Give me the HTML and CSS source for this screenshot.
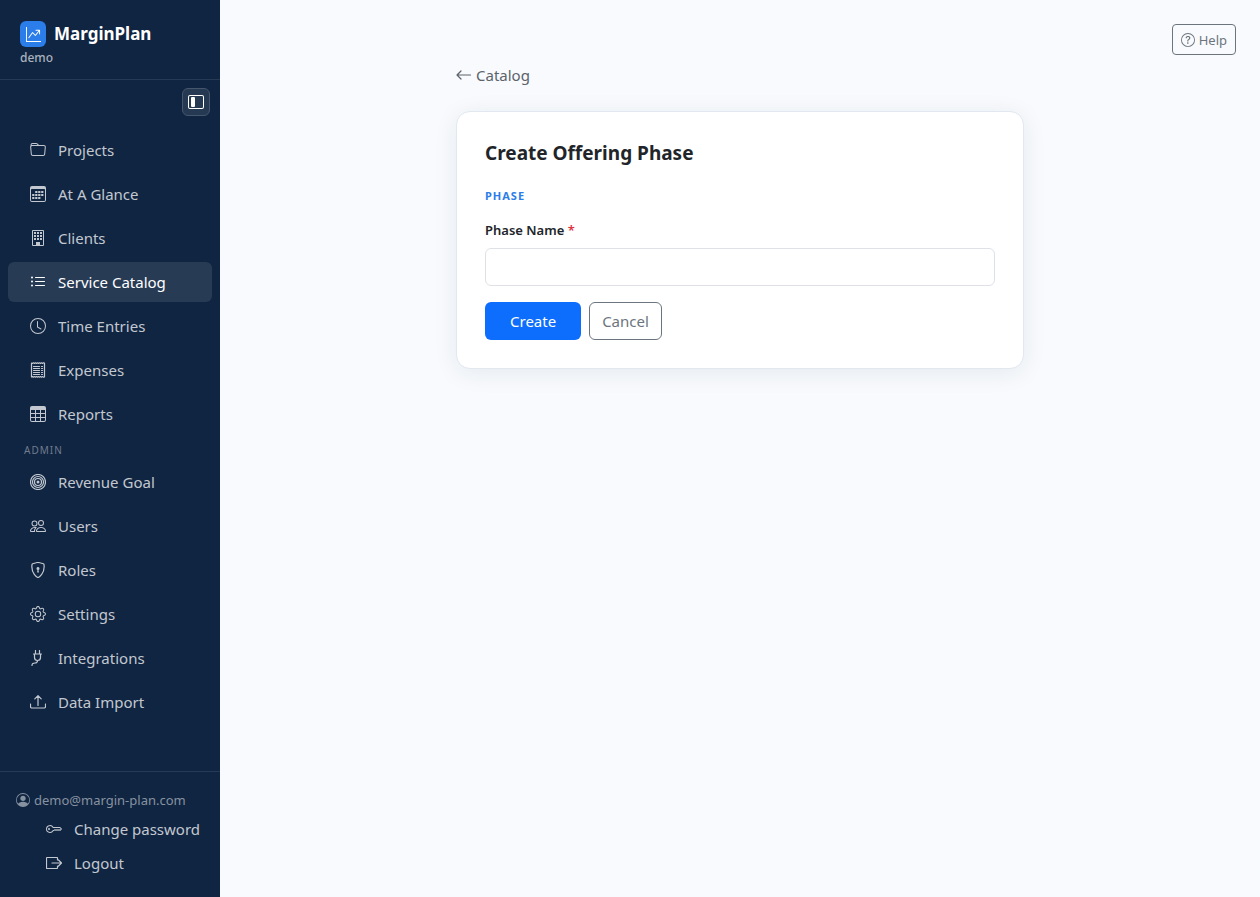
FILE: index.html
```html
<!DOCTYPE html>
<html lang="en">
<head>
    <meta charset="UTF-8">
    <meta name="viewport" content="width=device-width, initial-scale=1.0">
    <title>Create Offering Phase - MarginPlan</title>
    <link rel="stylesheet" href="styles.css">
</head>
<body>

    <aside class="sidebar">
        <div class="brand">
            <a class="brand-link" href="#">
                <span class="brand-logo">
                    <svg class="icon" viewBox="0 0 16 16"><path d="M0 0h1v15h15v1H0zm10 3.5a.5.5 0 0 1 .5-.5h4a.5.5 0 0 1 .5.5v4a.5.5 0 0 1-1 0V4.9l-3.613 4.417a.5.5 0 0 1-.74.037L7.06 6.767l-3.656 5.027a.5.5 0 0 1-.808-.588l4-5.5a.5.5 0 0 1 .758-.06l2.609 2.61L13.445 4H10.5a.5.5 0 0 1-.5-.5"/></svg>
                </span>
                MarginPlan
            </a>
            <div class="tenant">demo</div>
        </div>

        <div class="toggle-row">
            <button class="toggle" type="button" aria-label="Toggle sidebar">
                <svg class="icon" viewBox="0 0 16 16"><path fill-rule="evenodd" d="M0 3a2 2 0 0 1 2-2h12a2 2 0 0 1 2 2v10a2 2 0 0 1-2 2H2a2 2 0 0 1-2-2zm2-1a1 1 0 0 0-1 1v10a1 1 0 0 0 1 1h12a1 1 0 0 0 1-1V3a1 1 0 0 0-1-1z"/><path d="M3 4a1 1 0 0 1 1-1h2a1 1 0 0 1 1 1v8a1 1 0 0 1-1 1H4a1 1 0 0 1-1-1z"/></svg>
            </button>
        </div>

        <nav class="nav">
            <a class="nav-link" href="#">
                <svg class="icon" viewBox="0 0 16 16"><path d="M.54 3.87.5 3a2 2 0 0 1 2-2h3.672a2 2 0 0 1 1.414.586l.828.828A2 2 0 0 0 9.828 3h3.982a2 2 0 0 1 1.992 2.181l-.637 7A2 2 0 0 1 13.174 14H2.826a2 2 0 0 1-1.991-1.819l-.637-7a2 2 0 0 1 .342-1.31zM2.19 4a1 1 0 0 0-.996 1.09l.637 7a1 1 0 0 0 .995.91h10.348a1 1 0 0 0 .995-.91l.637-7A1 1 0 0 0 13.81 4zm4.69-1.707A1 1 0 0 0 6.172 2H2.5a1 1 0 0 0-1 .981l.006.139q.323-.119.684-.12h5.396z"/></svg>
                Projects
            </a>
            <a class="nav-link" href="#">
                <svg class="icon" viewBox="0 0 16 16"><path fill-rule="evenodd" d="M14 0H2a2 2 0 0 0-2 2v12a2 2 0 0 0 2 2h12a2 2 0 0 0 2-2V2a2 2 0 0 0-2-2M1 3.857C1 3.384 1.448 3 2 3h12c.552 0 1 .384 1 .857v10.286c0 .473-.448.857-1 .857H2c-.552 0-1-.384-1-.857z"/><path d="M5.2 5h2.2v2H5.2zm3 0h2.2v2H8.2zm3 0h2.2v2h-2.2zm-9 3h2.2v2H2.2zm3 0h2.2v2H5.2zm3 0h2.2v2H8.2zm3 0h2.2v2h-2.2zm-9 3h2.2v2H2.2zm3 0h2.2v2H5.2zm3 0h2.2v2H8.2z"/></svg>
                At A Glance
            </a>
            <a class="nav-link" href="#">
                <svg class="icon" viewBox="0 0 16 16"><path fill-rule="evenodd" d="M3 0a1 1 0 0 0-1 1v14a1 1 0 0 0 1 1h10a1 1 0 0 0 1-1V1a1 1 0 0 0-1-1zm0 1h10v14h-3v-2.5a.5.5 0 0 0-.5-.5h-3a.5.5 0 0 0-.5.5V15H3z"/><path d="M4 2h2v2H4zM7 2h2v2H7zM10 2h2v2h-2zM4 5h2v2H4zM7 5h2v2H7zM10 5h2v2h-2zM4 8h2v2H4zM7 8h2v2H7zM10 8h2v2h-2zM6 12h4v4H6z"/></svg>
                Clients
            </a>
            <a class="nav-link active" href="#" aria-current="page">
                <svg class="icon" viewBox="0 0 16 16"><path d="M5 11.5a.5.5 0 0 1 .5-.5h9a.5.5 0 0 1 0 1h-9a.5.5 0 0 1-.5-.5m0-4a.5.5 0 0 1 .5-.5h9a.5.5 0 0 1 0 1h-9a.5.5 0 0 1-.5-.5m0-4a.5.5 0 0 1 .5-.5h9a.5.5 0 0 1 0 1h-9a.5.5 0 0 1-.5-.5m-3 1a1 1 0 1 0 0-2 1 1 0 0 0 0 2m0 4a1 1 0 1 0 0-2 1 1 0 0 0 0 2m0 4a1 1 0 1 0 0-2 1 1 0 0 0 0 2"/></svg>
                Service Catalog
            </a>
            <a class="nav-link" href="#">
                <svg class="icon" viewBox="0 0 16 16"><path d="M8 3.5a.5.5 0 0 0-1 0V9a.5.5 0 0 0 .252.434l3.5 2a.5.5 0 0 0 .496-.868L8 8.71z"/><path d="M8 16A8 8 0 1 0 8 0a8 8 0 0 0 0 16m7-8A7 7 0 1 1 1 8a7 7 0 0 1 14 0"/></svg>
                Time Entries
            </a>
            <a class="nav-link" href="#">
                <svg class="icon line" viewBox="0 0 16 16"><path d="M1.5 1l1 .4 1-.6 1 .6 1-.6 1 .6 1-.6 1 .6 1-.6 1 .6 1-.6 1 .6 1-.6 1 .2v14l-1 .2-1-.6-1 .6-1-.6-1 .6-1-.6-1 .6-1-.6-1 .6-1-.6-1 .6-1-.6-1 .4zM3.5 4.5h6M3.500 6.500h6M3.500 8.500h6M3.500 10.500h6M3.500 12.500h6M11.500 4.500h1M11.500 6.500h1M11.500 8.500h1M11.500 10.500h1M11.500 12.500h1"/></svg>
                Expenses
            </a>
            <a class="nav-link" href="#">
                <svg class="icon" viewBox="0 0 16 16"><path d="M0 2a2 2 0 0 1 2-2h12a2 2 0 0 1 2 2v12a2 2 0 0 1-2 2H2a2 2 0 0 1-2-2zm15 2h-4v3h4zm0 4h-4v3h4zm0 4h-4v3h3a1 1 0 0 0 1-1zm-5 3v-3H6v3zm-5 0v-3H1v2a1 1 0 0 0 1 1zm-4-4h4V8H1zm0-4h4V4H1zm5-3v3h4V4zm4 4H6v3h4z"/></svg>
                Reports
            </a>

            <div class="nav-section">Admin</div>

            <a class="nav-link" href="#">
                <svg class="icon line" viewBox="0 0 16 16"><circle cx="8" cy="8" r="7.5"/><circle cx="8" cy="8" r="5.5"/><circle cx="8" cy="8" r="3.5"/><circle class="solid" cx="8" cy="8" r="1.5"/></svg>
                Revenue Goal
            </a>
            <a class="nav-link" href="#">
                <svg class="icon" viewBox="0 0 16 16"><path d="M15 14s1 0 1-1-1-4-5-4-5 3-5 4 1 1 1 1zm-7.978-1L7 12.996c.001-.264.167-1.03.76-1.72C8.312 10.629 9.282 10 11 10c1.717 0 2.687.63 3.24 1.276.593.69.758 1.457.76 1.72l-.008.002-.014.002zM11 7a2 2 0 1 0 0-4 2 2 0 0 0 0 4m3-2a3 3 0 1 1-6 0 3 3 0 0 1 6 0M6.936 9.28a6 6 0 0 0-1.23-.247A7 7 0 0 0 5 9c-4 0-5 3-5 4q0 1 1 1h4.216A2.24 2.24 0 0 1 5 13c0-1.01.377-2.042 1.09-2.904.243-.294.526-.569.846-.816M4.92 10A5.5 5.5 0 0 0 4 13H1c0-.26.164-1.03.76-1.724.545-.636 1.492-1.256 3.16-1.275ZM1.5 5.5a3 3 0 1 1 6 0 3 3 0 0 1-6 0m3-2a2 2 0 1 0 0 4 2 2 0 0 0 0-4"/></svg>
                Users
            </a>
            <a class="nav-link" href="#">
                <svg class="icon line" viewBox="0 0 16 16"><path d="M8 .5c-1 0-3.4.7-5.4 1.300a.9.9 0 0 0-.6.8c-.6 4.400.7 7.600 2.300 9.700C5.700 14.100 7.300 15.500 8 15.500s2.300-1.400 3.700-3.200c1.600-2.100 2.900-5.300 2.300-9.700a.9.9 0 0 0-.6-.8C11.400 1.200 9 .5 8 .5z"/><path class="solid" d="M9.500 6.500a1.500 1.500 0 0 1-1 1.415l.385 1.990a.5.5 0 0 1-.491.595h-.788a.5.5 0 0 1-.49-.595l.384-1.990a1.500 1.500 0 1 1 2-1.415"/></svg>
                Roles
            </a>
            <a class="nav-link" href="#">
                <svg class="icon" viewBox="0 0 16 16"><path d="M8 4.754a3.246 3.246 0 1 0 0 6.492 3.246 3.246 0 0 0 0-6.492M5.754 8a2.246 2.246 0 1 1 4.492 0 2.246 2.246 0 0 1-4.492 0"/><path d="M9.796 1.343c-.527-1.79-3.065-1.79-3.592 0l-.094.319a.873.873 0 0 1-1.255.52l-.292-.16c-1.64-.892-3.433.902-2.54 2.541l.159.292a.873.873 0 0 1-.52 1.255l-.319.094c-1.79.527-1.79 3.065 0 3.592l.319.094a.873.873 0 0 1 .52 1.255l-.16.292c-.892 1.64.901 3.434 2.541 2.54l.292-.159a.873.873 0 0 1 1.255.52l.094.319c.527 1.79 3.065 1.79 3.592 0l.094-.319a.873.873 0 0 1 1.255-.52l.292.16c1.64.893 3.434-.902 2.54-2.541l-.159-.292a.873.873 0 0 1 .52-1.255l.319-.094c1.79-.527 1.79-3.065 0-3.592l-.319-.094a.873.873 0 0 1-.52-1.255l.16-.292c.893-1.64-.902-3.433-2.541-2.54l-.292.159a.873.873 0 0 1-1.255-.52zm-2.633.283c.246-.835 1.428-.835 1.674 0l.094.319a1.873 1.873 0 0 0 2.693 1.115l.291-.16c.764-.415 1.6.42 1.184 1.185l-.159.292a1.873 1.873 0 0 0 1.116 2.692l.318.094c.835.246.835 1.428 0 1.674l-.319.094a1.873 1.873 0 0 0-1.115 2.693l.16.291c.415.764-.42 1.6-1.185 1.184l-.291-.159a1.873 1.873 0 0 0-2.693 1.116l-.094.318c-.246.835-1.428.835-1.674 0l-.094-.319a1.873 1.873 0 0 0-2.692-1.115l-.292.16c-.764.415-1.6-.42-1.184-1.185l.159-.291A1.873 1.873 0 0 0 1.945 8.93l-.319-.094c-.835-.246-.835-1.428 0-1.674l.319-.094A1.873 1.873 0 0 0 3.06 4.377l-.16-.292c-.415-.764.42-1.6 1.185-1.184l.292.159a1.873 1.873 0 0 0 2.692-1.115z"/></svg>
                Settings
            </a>
            <a class="nav-link" href="#">
                <svg class="icon line" viewBox="0 0 16 16"><path d="M5.5.5V4M9.5.5V4M3.500 4h8M4.500 4v3.500c0 1.700 1.200 3 3 3s3-1.300 3-3V4M7.500 10.500c0 1.800-.6 2.500-2.500 2.500-1.800 0-3 .5-3 2.500"/></svg>
                Integrations
            </a>
            <a class="nav-link" href="#">
                <svg class="icon line" viewBox="0 0 16 16"><path d="M.5 10v2.500a1.500 1.500 0 0 0 1.500 1.500h12a1.500 1.500 0 0 0 1.500-1.500V10M8 11.500V2M4.800 4.800 8 1.600l3.200 3.200"/></svg>
                Data Import
            </a>
        </nav>

        <div class="account">
            <div class="account-email">
                <svg class="icon" viewBox="0 0 16 16"><path d="M11 6a3 3 0 1 1-6 0 3 3 0 0 1 6 0"/><path fill-rule="evenodd" d="M0 8a8 8 0 1 1 16 0A8 8 0 0 1 0 8m8-7a7 7 0 0 0-5.468 11.37C3.242 11.226 4.805 10 8 10s4.757 1.225 5.468 2.37A7 7 0 0 0 8 1"/></svg>
                demo@margin-plan.com
            </div>
            <a class="account-link" href="#">
                <svg class="icon" viewBox="0 0 16 16"><path d="M0 8a4 4 0 0 1 7.465-2H14a.5.5 0 0 1 .354.146l1.5 1.5a.5.5 0 0 1 0 .708l-1.5 1.5a.5.5 0 0 1-.708 0L13 9.207l-.646.647a.5.5 0 0 1-.708 0L11 9.207l-.646.647a.5.5 0 0 1-.708 0L9 9.207l-.646.647A.5.5 0 0 1 8 10h-.535A4 4 0 0 1 0 8m4-3a3 3 0 1 0 2.712 4.285A.5.5 0 0 1 7.163 9h.63l.853-.854a.5.5 0 0 1 .708 0l.646.647.646-.647a.5.5 0 0 1 .708 0l.646.647.646-.647a.5.5 0 0 1 .708 0l.646.647.793-.793-1-1h-6.63a.5.5 0 0 1-.451-.285A3 3 0 0 0 4 5"/><circle cx="3" cy="8" r="1"/></svg>
                Change password
            </a>
            <a class="account-link" href="#">
                <svg class="icon line" viewBox="0 0 16 16"><path d="M11.500 5V3a.5.5 0 0 0-.5-.5H1a.5.5 0 0 0-.5.5v10a.5.5 0 0 0 .5.5h10a.5.5 0 0 0 .5-.5v-2M6 8h9M12.500 5l3 3-3 3"/></svg>
                Logout
            </a>
        </div>
    </aside>

    <main class="main">
        <div class="topbar">
            <button class="btn btn-outline btn-sm" type="button">
                <svg class="icon" viewBox="0 0 16 16"><path d="M8 15A7 7 0 1 1 8 1a7 7 0 0 1 0 14m0 1A8 8 0 1 0 8 0a8 8 0 0 0 0 16"/><path d="M5.255 5.786a.237.237 0 0 0 .241.247h.825c.138 0 .248-.113.266-.25.09-.656.54-1.134 1.342-1.134.686 0 1.314.343 1.314 1.168 0 .635-.374.927-.965 1.371-.673.489-1.206 1.06-1.168 1.987l.003.217a.25.25 0 0 0 .25.246h.811a.25.25 0 0 0 .25-.25v-.105c0-.718.273-.927 1.01-1.486.609-.463 1.244-.977 1.244-2.056 0-1.511-1.276-2.241-2.673-2.241-1.267 0-2.655.59-2.75 2.286m1.557 5.763c0 .533.425.927 1.01.927.609 0 1.028-.394 1.028-.927 0-.552-.42-.94-1.029-.94-.584 0-1.009.388-1.009.94"/></svg>
                Help
            </button>
        </div>

        <div class="content">
            <a class="back-link" href="#">
                <svg class="icon line" viewBox="0 0 16 16"><path d="M14.500 8H1.500M5 4 1 8l4 4"/></svg>
                Catalog
            </a>

            <form class="card">
                <h1>Create Offering Phase</h1>
                <h2>Phase</h2>
                <label for="phaseName">Phase Name <span class="required">*</span></label>
                <input type="text" id="phaseName" name="phaseName" required>
                <div class="actions">
                    <button class="btn btn-primary" type="submit">Create</button>
                    <button class="btn btn-outline" type="button">Cancel</button>
                </div>
            </form>
        </div>
    </main>

</body>
</html>
```
FILE: styles.css
```css
* {
    box-sizing: border-box;
}
body {
    font-family: "Segoe UI", "Noto Sans", sans-serif;
    font-size: 15px;
    line-height: 24px;
    display: flex;
    min-height: 100vh;
    background-color: #f8fafd;
    color: #212529;
    margin: 0;
}
a {
    text-decoration: none;
}
.icon {
    width: 16px;
    height: 16px;
    flex: none;
    fill: currentColor;
}
.line {
    fill: none;
    stroke: currentColor;
    stroke-width: 1.2;
    stroke-linecap: round;
    stroke-linejoin: round;
}
.solid {
    fill: currentColor;
    stroke: none;
}

/* Sidebar */
.sidebar {
    display: flex;
    flex-direction: column;
    flex: none;
    width: 220px;
    background: #102542;
    color: #c3c8d0;
}
.brand {
    padding: 20px 20px 11px;
    border-bottom: 1px solid #273a55;
}
.brand-link {
    display: flex;
    align-items: center;
    gap: 8px;
    height: 28px;
    color: #fff;
    font-size: 17px;
    font-weight: 700;
}
.brand-logo {
    display: flex;
    align-items: center;
    justify-content: center;
    width: 26px;
    height: 26px;
    border-radius: 6px;
    background: #2b7de9;
}
.brand-logo .icon {
    width: 15px;
    height: 15px;
}
.tenant {
    font-size: 12px;
    line-height: 20px;
    font-weight: 500;
    color: #aab2be;
}
.toggle-row {
    display: flex;
    justify-content: flex-end;
    padding: 8px 10px;
}
.toggle {
    display: flex;
    align-items: center;
    justify-content: center;
    width: 28px;
    height: 28px;
    padding: 0;
    border: 1px solid #46566d;
    border-radius: 6px;
    background: #263953;
    color: #fff;
    cursor: pointer;
}
.nav {
    flex: 1;
    padding: 6px 8px;
}
.nav-link {
    display: flex;
    align-items: center;
    gap: 12px;
    height: 40px;
    margin-bottom: 4px;
    padding: 0 22px;
    border-radius: 6px;
    color: #c3c8d0;
}
.nav-link:hover, .nav-link.active {
    background: #283b55;
    color: #fff;
}
.nav-section {
    padding: 0 16px;
    font-size: 10px;
    letter-spacing: 1px;
    text-transform: uppercase;
    color: #707c8e;
}
.account {
    padding: 16px 16px 17px;
    border-top: 1px solid #273a55;
}
.account-email {
    display: flex;
    align-items: center;
    gap: 4px;
    font-size: 13px;
    color: #8792a0;
}
.account-email .icon {
    width: 14px;
    height: 14px;
}
.account-link {
    display: flex;
    align-items: center;
    gap: 12px;
    height: 34px;
    padding-left: 30px;
    color: #c3c8d0;
}

/* Main area */
.main {
    flex: 1;
    padding: 24px;
}
.topbar {
    display: flex;
    justify-content: flex-end;
}
.content {
    max-width: 568px;
    margin: 8px auto 0;
}
.back-link {
    display: flex;
    align-items: center;
    gap: 4px;
    width: fit-content;
    color: #5b636b;
}
.card {
    margin-top: 24px;
    padding: 28px;
    background: #fff;
    border: 1px solid #e2e8f0;
    border-radius: 14px;
    box-shadow: 0 4px 24px rgba(16, 50, 80, 0.08);
}
h1 {
    margin: 0 0 20px;
    font-size: 19px;
    line-height: 26px;
    font-weight: 700;
}
h2 {
    margin: 0 0 14px;
    font-size: 11px;
    line-height: 20px;
    font-weight: 700;
    letter-spacing: 1px;
    text-transform: uppercase;
    color: #2b7de9;
}
label {
    display: block;
    margin-bottom: 8px;
    font-size: 13px;
    line-height: 20px;
    font-weight: 600;
}
.required {
    color: #dc3545;
}
input {
    display: block;
    width: 100%;
    height: 38px;
    padding: 6px 12px;
    border: 1px solid #dee2e6;
    border-radius: 6px;
    font: inherit;
}
.actions {
    display: flex;
    gap: 8px;
    margin-top: 16px;
}
.btn {
    display: flex;
    align-items: center;
    gap: 4px;
    height: 38px;
    padding: 0 12px;
    border: 1px solid transparent;
    border-radius: 6px;
    font: inherit;
    cursor: pointer;
}
.btn-primary {
    padding: 0 24px;
    background: #0d6efd;
    color: #fff;
}
.btn-outline {
    background: transparent;
    border-color: #6c757d;
    color: #6c757d;
}
.btn-sm {
    height: 31px;
    padding: 0 8px;
    border-radius: 4px;
    font-size: 13px;
}
.btn-sm .icon {
    width: 14px;
    height: 14px;
}
```
